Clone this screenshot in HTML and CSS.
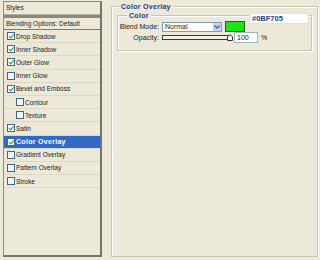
FILE: index.html
```html
<!DOCTYPE html>
<html lang="en">

<head>
    <meta charset="UTF-8">
    <title>Layer Style - Color Overlay</title>
    <link rel="stylesheet" href="styles.css">
</head>

<body>
    <div class="styles-panel">
        <div class="panel-head">Styles</div>
        <div class="panel-bar"></div>
        <div class="blend-row">Blending Options: Default</div>
        <ul class="effect-list">
            <li class="effect"><span class="check on"></span>Drop Shadow</li>
            <li class="effect"><span class="check on"></span>Inner Shadow</li>
            <li class="effect"><span class="check on"></span>Outer Glow</li>
            <li class="effect"><span class="check"></span>Inner Glow</li>
            <li class="effect"><span class="check on"></span>Bevel and Emboss</li>
            <li class="effect sub"><span class="check"></span>Contour</li>
            <li class="effect sub"><span class="check"></span>Texture</li>
            <li class="effect"><span class="check on"></span>Satin</li>
            <li class="effect selected"><span class="check on"></span>Color Overlay</li>
            <li class="effect"><span class="check"></span>Gradient Overlay</li>
            <li class="effect"><span class="check"></span>Pattern Overlay</li>
            <li class="effect"><span class="check"></span>Stroke</li>
        </ul>
    </div>

    <div class="group outer">
        <div class="group-title">Color Overlay</div>
        <div class="group inner">
            <div class="group-title">Color</div>
            <div class="hex-note">#0BF705</div>

            <div class="field-row">
                <label class="field-label">Blend Mode:</label>
                <div class="select">
                    <span class="select-text">Normal</span>
                    <span class="select-btn">
                        <svg width="6" height="4" viewBox="0 0 6 4"><path d="M0.5 0.5 L3 3 L5.5 0.5" fill="none" stroke="#4d61a8" stroke-width="1.3"/></svg>
                    </span>
                </div>
                <div class="swatch"></div>
            </div>

            <div class="field-row">
                <label class="field-label">Opacity:</label>
                <div class="slider">
                    <div class="track"></div>
                    <svg class="thumb" width="6" height="7" viewBox="0 0 6 7"><path d="M0.5 6.5 V3 L3 0.5 L5.5 3 V6.5 Z" fill="#fff" stroke="#333" stroke-width="1"/></svg>
                </div>
                <div class="num-input">100</div>
                <span class="unit">%</span>
            </div>
        </div>
    </div>
</body>

</html>
```

FILE: styles.css
```css
body {
    margin: 0;
    background-color: #ece9d8;
    font-family: "Liberation Sans", Arial, sans-serif;
    font-size: 7px;
    color: #1a1a1a;
    display: flex;
    align-items: flex-start;
}

/* left list */
.styles-panel {
    width: 99px;
    height: 256px;
    margin: 1px 0 0 3px;
    border: 1px solid #8e8c82;
    border-right: 2px solid #75736a;
    border-bottom: 2px solid #75736a;
    box-sizing: border-box;
    display: flex;
    flex-direction: column;
    font-size: 6.5px;
}

.panel-head {
    height: 12px;
    line-height: 12px;
    padding-left: 2px;
    border-bottom: 1px solid #b3b0a2;
}

.panel-bar {
    height: 3px;
    background-color: #8b897f;
}

.blend-row {
    height: 11px;
    line-height: 11px;
    padding-left: 2px;
    border-bottom: 1px solid #7d7b72;
}

.effect-list {
    list-style: none;
    margin: 0;
    padding: 0;
}

.effect {
    height: 12.2px;
    border-bottom: 1px solid #dcd9c7;
    display: flex;
    align-items: center;
    padding-left: 3px;
}

.effect.sub {
    padding-left: 12px;
}

.effect.selected {
    background-color: #316ac5;
    color: #fff;
    font-weight: bold;
    font-size: 7px;
    letter-spacing: 0.3px;
}

.check {
    width: 8px;
    height: 8px;
    margin-right: 1px;
    box-sizing: border-box;
    border: 1px solid #3d6790;
    background-color: #f4f3ee;
    flex-shrink: 0;
}

.check.on {
    background-color: #fff;
    position: relative;
}

.check.on::after {
    content: "";
    position: absolute;
    left: 1.5px;
    top: 0;
    width: 1.5px;
    height: 3.5px;
    border: solid #21a121;
    border-width: 0 1.5px 1.5px 0;
    transform: rotate(40deg);
}

/* right side groups */
.group {
    border: 1px solid #c9c6b3;
    box-shadow: inset 1px 1px 0 #fff, 1px 1px 0 #fff;
    box-sizing: border-box;
}

.outer {
    width: 207px;
    height: 251px;
    margin: 6px 0 0 9px;
    padding: 0 5px;
}

.group-title {
    display: table;
    margin: -5px 0 0 2px;
    padding: 0 2px;
    line-height: 10px;
    background-color: #ece9d8;
    color: #1f3a8a;
    font-weight: bold;
    letter-spacing: 0.3px;
}

.inner {
    width: 195px;
    height: 36px;
    margin-top: 3px;
    position: relative;
}

.inner .group-title {
    margin-left: 9px;
}

.hex-note {
    position: absolute;
    left: 131px;
    top: -3px;
    width: 60px;
    height: 11px;
    box-sizing: border-box;
    border: 1px solid #e4e2d8;
    background-color: #fff;
    color: #283b8c;
    font-size: 7.5px;
    font-weight: bold;
    line-height: 10px;
    padding-left: 2px;
}

.field-row {
    display: flex;
    align-items: center;
    height: 11px;
}

.field-row:first-of-type {
    margin-top: 2px;
}

.field-label {
    width: 41px;
    text-align: right;
    margin-right: 3px;
    color: #222;
}

.select {
    width: 60px;
    height: 10px;
    box-sizing: border-box;
    border: 1px solid #7f9db9;
    background-color: #fff;
    display: flex;
    align-items: center;
    justify-content: space-between;
}

.select-text {
    padding-left: 2px;
}

.select-btn {
    width: 8px;
    height: 8px;
    background-color: #c3d3f8;
    display: flex;
    align-items: center;
    justify-content: center;
}

.swatch {
    width: 20px;
    height: 11px;
    margin-left: 3px;
    box-sizing: border-box;
    border: 1px solid #4a4a44;
    background-color: #17e617;
}

.slider {
    width: 69px;
    position: relative;
    display: flex;
    align-items: center;
}

.track {
    width: 100%;
    height: 3px;
    border: 1px solid #3a3a36;
    background-color: #f2f1ea;
}

.thumb {
    position: absolute;
    right: -2px;
    top: -1px;
}

.num-input {
    width: 24px;
    height: 11px;
    margin-left: 3px;
    box-sizing: border-box;
    border: 1px solid #9fb2c6;
    background-color: #fff;
    line-height: 9px;
    padding-left: 2px;
}

.unit {
    margin-left: 3px;
}
```
